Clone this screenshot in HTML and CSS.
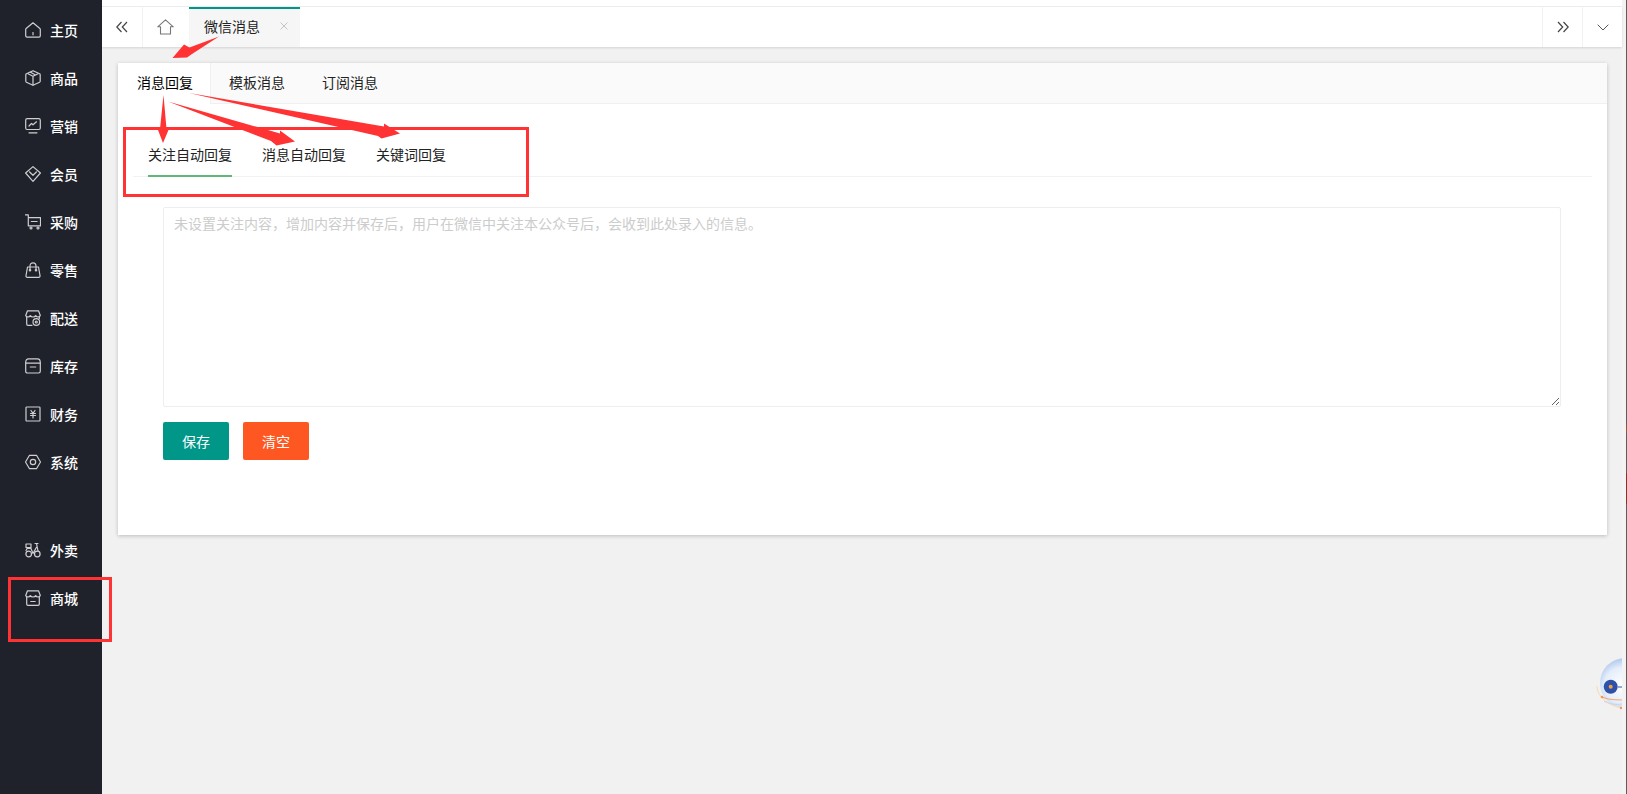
FILE: index.html
```html
<!DOCTYPE html>
<html lang="zh-CN">
<head>
<meta charset="utf-8">
<title>微信消息</title>
<link rel="stylesheet" href="styles.css">
</head>
<body>
<div class="app">
  <nav class="sidebar">
    <ul class="menu">
      <li><a class="menu-item" href="#"><svg class="menu-icon" viewBox="0 0 16 16"><path d="M8 .8 14.600 6.200c.4.3.7.7.7 1.200v6.400c0 .8-.6 1.400-1.400 1.400H2.100c-.8 0-1.400-.6-1.400-1.400V7.400c0-.5.3-.9.7-1.200Z"/><path d="M8 10.600v2.200"/></svg><span>主页</span></a></li>
      <li><a class="menu-item" href="#"><svg class="menu-icon" viewBox="0 0 16 16"><path d="M8 .7 14.600 3.800c.4.2.6.5.6.9v6.600c0 .4-.2.7-.6.9L8 15.300 1.400 12.200c-.4-.2-.6-.5-.6-.9V4.700c0-.4.2-.7.6-.9Z"/><path d="M3 3.700 8 6.300 13 3.700M8 6.300V15M5.500 2.300 10.500 5"/></svg><span>商品</span></a></li>
      <li><a class="menu-item" href="#"><svg class="menu-icon" viewBox="0 0 16 16"><rect x=".7" y=".7" width="14.600" height="10.800" rx="1.500"/><path d="M4 8 6.500 5.500 8 6.800 11.500 3.800M4 14.800h8"/></svg><span>营销</span></a></li>
      <li><a class="menu-item" href="#"><svg class="menu-icon" viewBox="0 0 16 16"><path d="M8 .6 15.400 7 8 15.400.6 7Z"/><path d="M4.600 6 8 9.300 11.400 6"/></svg><span>会员</span></a></li>
      <li><a class="menu-item" href="#"><svg class="menu-icon" viewBox="0 0 16 16"><path d="M.3 .8H3.300V11.800H15.500V3.700H3.300"/><path d="M6.300 7.500h5.800"/><circle cx="6" cy="14" r="1"/><circle cx="13" cy="14" r="1"/></svg><span>采购</span></a></li>
      <li><a class="menu-item" href="#"><svg class="menu-icon" viewBox="0 0 16 16"><path d="M2.500 5H13.500L15 13.500C15.200 14.500 14.600 15.300 13.600 15.300H2.400C1.400 15.300 .8 14.500 1 13.500Z"/><path d="M5 7.500V4C5 2 6.300 .8 8 .8S11 2 11 4V7.500"/><circle cx="5" cy="8.300" r=".7"/><circle cx="11" cy="8.300" r=".7"/></svg><span>零售</span></a></li>
      <li><a class="menu-item" href="#"><svg class="menu-icon" viewBox="0 0 16 16"><path d="M2.500.8H13.500L15.300 5.500C14.500 7.500 11.500 7.500 10.700 5.500 10 7.500 6 7.500 5.300 5.500 4.500 7.500 1.500 7.500.7 5.500Z"/><path d="M1.700 7V14c0 .8.5 1.300 1.300 1.300H7M14.300 7V8.500"/><circle cx="11.300" cy="12" r="3.300"/><circle cx="11.300" cy="12" r="1"/></svg><span>配送</span></a></li>
      <li><a class="menu-item" href="#"><svg class="menu-icon" viewBox="0 0 16 16"><path d="M3.500.8H12.500C14 .8 15.300 2 15.300 4.500V13.300C15.300 14.300 14.600 15 13.600 15H2.400C1.400 15 .7 14.300.7 13.300V4.500C.7 2 2 .8 3.500.8Z"/><path d="M.7 5.200H15.300M5.300 9h5.400"/></svg><span>库存</span></a></li>
      <li><a class="menu-item" href="#"><svg class="menu-icon" viewBox="0 0 16 16"><rect x="1" y="1" width="14" height="14" rx=".8"/><path d="M6 4.500 8 7.300 10 4.500M5.500 7.500h5M5.500 9.500h5M8 7.300V12"/></svg><span>财务</span></a></li>
      <li><a class="menu-item" href="#"><svg class="menu-icon" viewBox="0 0 16 16"><path d="M4.500 1.300H11.500L15.500 8 11.500 14.700H4.500L.5 8Z"/><circle cx="8" cy="8" r="2.700"/></svg><span>系统</span></a></li>
      <li class="menu-gap"><a class="menu-item" href="#"><svg class="menu-icon" viewBox="0 0 16 16"><path d="M1 2H6V5.500H1ZM1 8.500 2 6.500H6L8 11.500M10 1.500H13M11.500 1.500 13 9M11.300 5.500 8 11.500"/><circle cx="3.700" cy="12" r="2.800"/><circle cx="12.300" cy="12" r="2.800"/></svg><span>外卖</span></a></li>
      <li><a class="menu-item" href="#"><svg class="menu-icon" viewBox="0 0 16 16"><path d="M2.500.8H13.500L15.300 5.500C14.500 7.500 11.500 7.500 10.700 5.500 10 7.500 6 7.500 5.300 5.500 4.500 7.500 1.500 7.500.7 5.500Z"/><path d="M1.700 7V14c0 .8.5 1.300 1.300 1.300H13c.8 0 1.300-.5 1.300-1.300V7M5.800 11.500h4.400"/></svg><span>商城</span></a></li>
    </ul>
  </nav>
  <div class="main">
    <div class="top-strip"></div>
    <header class="topbar">
      <button class="tool-btn" type="button" aria-label="向左"><svg class="tool-icon" viewBox="0 0 12 12"><path d="M5.500 1 .8 6 5.500 11M11 1 6.300 6 11 11"/></svg></button>
      <button class="tool-btn home-btn" type="button" aria-label="首页"><svg class="home-icon" viewBox="0 0 17 16"><path d="M8.500.8 16.300 7.800H13.500V15H3.500V7.800H.7Z"/></svg></button>
      <div class="page-tab"><span>微信消息</span><svg class="close-icon" viewBox="0 0 8 8"><path d="M.5.5 7.500 7.500M7.500.5.500 7.500"/></svg></div>
      <div class="topbar-fill"></div>
      <button class="tool-btn tool-left" type="button" aria-label="向右"><svg class="tool-icon" viewBox="0 0 12 12"><path d="M1 1 5.700 6 1 11M6.500 1 11.200 6 6.500 11"/></svg></button>
      <button class="tool-btn tool-left" type="button" aria-label="更多"><svg class="chevron" viewBox="0 0 12 7"><path d="M.7.7 6 6 11.300.7"/></svg></button>
    </header>
    <main class="content">
      <section class="card">
        <div class="card-tabs">
          <a class="card-tab active" href="#">消息回复</a>
          <a class="card-tab" href="#">模板消息</a>
          <a class="card-tab" href="#">订阅消息</a>
        </div>
        <div class="card-body">
          <div class="sub-tabs">
            <a class="sub-tab active" href="#">关注自动回复</a>
            <a class="sub-tab" href="#">消息自动回复</a>
            <a class="sub-tab" href="#">关键词回复</a>
          </div>
          <div class="form">
            <textarea class="reply-input" placeholder="未设置关注内容，增加内容并保存后，用户在微信中关注本公众号后，会收到此处录入的信息。"></textarea>
            <div class="actions">
              <button class="btn btn-save" type="button">保存</button>
              <button class="btn btn-clear" type="button">清空</button>
            </div>
          </div>
        </div>
      </section>
    </main>
  </div>
  <div class="edge-strip"></div>
</div>

<svg class="orb" viewBox="0 0 26 54" aria-hidden="true">
  <defs>
    <radialGradient id="orbFill" cx="45%" cy="55%" r="65%">
      <stop offset="0" stop-color="#ffffff"/>
      <stop offset=".55" stop-color="#e6eefb"/>
      <stop offset="1" stop-color="#8fb2e6"/>
    </radialGradient>
  </defs>
  <circle cx="29" cy="26" r="25" fill="url(#orbFill)"/>
  <path d="M1 29C1 38 10 48 26 51" fill="none" stroke="#fbd5b0" stroke-width="1"/>
  <path d="M6 40C12 43 20 43 26 43" fill="none" stroke="#f5a868" stroke-width="1.200"/>
  <path d="M8 44C13 47 20 48 26 47" fill="none" stroke="#c9d3e6" stroke-width="1"/>
  <circle cx="14.700" cy="29.700" r="7" fill="#2f50a8"/>
  <circle cx="14.700" cy="29.700" r="2" fill="#f2a040"/>
  <path d="M22 30H26" stroke="#2f50a8" stroke-width="1"/>
  <circle cx="6" cy="40" r="1.300" fill="#f59a4c"/>
  <circle cx="25" cy="51" r="1.200" fill="#f59a4c"/>
</svg>

<svg class="annotations" viewBox="0 0 1627 794" aria-hidden="true">
  <g class="note-box">
    <rect x="124.500" y="128.500" width="403" height="67"/>
    <rect x="9.500" y="578.500" width="101" height="62"/>
  </g>
  <g class="note-arrow">
    <polygon points="219,36.500 189.500,47.500 184,44.500 172.500,58 187,57.500 192,54"/>
    <polygon points="163.500,95 166.500,129 168.500,130 163,143 158,130 160,129"/>
    <polygon points="168,101.500 280,133.500 280,130.500 295,141.500 276.500,145.500 271,141"/>
    <polygon points="189,93 384,126.500 384,123.500 400,133.500 381.500,138.500 378,136"/>
  </g>
</svg>
</body>
</html>
```

FILE: styles.css
```css
* {
  box-sizing: border-box;
}

html,
body {
  margin: 0;
  height: 100%;
  overflow: hidden;
}

body {
  position: relative;
  font-family: "Noto Sans CJK SC", "Liberation Sans", sans-serif;
  font-size: 14px;
  color: #222;
  background: #f1f1f1;
}

a {
  color: inherit;
  text-decoration: none;
}

.app {
  display: flex;
  height: 100vh;
}

/* sidebar */
.sidebar {
  flex: 0 0 102px;
  background: #20222b;
  padding-top: 6px;
}

.menu {
  list-style: none;
  margin: 0;
  padding: 0;
}

.menu-gap {
  margin-top: 40px;
}

.menu-item {
  display: flex;
  align-items: center;
  gap: 9px;
  height: 48px;
  padding-left: 25px;
  color: #fff;
  font-weight: 500;
  line-height: 20px;
}

.menu-icon {
  flex: none;
  width: 16px;
  height: 16px;
  fill: none;
  stroke: #cfcfd2;
  stroke-width: 1.200;
  stroke-linejoin: round;
  stroke-linecap: round;
}

/* main column */
.main {
  flex: 1;
  min-width: 0;
  display: flex;
  flex-direction: column;
}

.edge-strip {
  flex: 0 0 5px;
  background: #f3f3f3;
  border-right: 1px solid #5e5e5e;
  border-image: linear-gradient(to bottom, #5e5e5e 0 53.500%, #8a5a40 53.500% 54.500%, #5e5e5e 54.500% 59.600%, #8e2f28 59.600% 63.400%, #5e5e5e 63.400%) 1;
}

.top-strip {
  height: 7px;
  background: #fff;
  border-bottom: 1px solid #eee;
}

.topbar {
  display: flex;
  height: 40px;
  background: #fff;
  box-shadow: 0 1px 2px rgba(0, 0, 0, .12);
  position: relative;
}

.tool-btn {
  flex: none;
  display: flex;
  align-items: center;
  justify-content: center;
  width: 40px;
  height: 40px;
  padding: 0;
  border: 0;
  background: #fff;
}

.home-btn {
  width: 47px;
  padding-right: 1px;
  border-left: 1px solid #f2f2f2;
}

.tool-left {
  border-left: 1px solid #f2f2f2;
}

.tool-icon {
  width: 12px;
  height: 12px;
  fill: none;
  stroke: #444;
  stroke-width: 1.200;
}

.chevron {
  width: 12px;
  height: 7px;
  fill: none;
  stroke: #555;
  stroke-width: 1;
}

.home-icon {
  width: 17px;
  height: 16px;
  fill: none;
  stroke: #777;
  stroke-width: 1.100;
  stroke-linejoin: round;
}

.page-tab {
  flex: none;
  display: flex;
  align-items: center;
  width: 111px;
  height: 40px;
  padding: 0 0 4px 15px;
  background: #f6f6f6;
  border-top: 2px solid #009688;
}

.close-icon {
  width: 8px;
  height: 8px;
  margin-left: 20px;
  fill: none;
  stroke: #c4c4c4;
  stroke-width: 1;
}

.topbar-fill {
  flex: 1;
}

/* content */
.content {
  flex: 1;
  padding: 16px 15px 0 16px;
}

.card {
  height: 472px;
  background: #fff;
  box-shadow: 0 1px 4px rgba(0, 0, 0, .22);
}

.card-tabs {
  display: flex;
  height: 41px;
  background: #fafafa;
  border-bottom: 1px solid #f0f0f0;
}

.card-tab {
  height: 41px;
  padding: 0 19px 0 18px;
  line-height: 38px;
}

.card-tab.active {
  width: 93px;
  padding: 0 0 0 19px;
  background: #fff;
  color: #000;
  border-right: 1px solid #f0f0f0;
}

.card-body {
  padding: 32px 15px 0;
}

.sub-tabs {
  display: flex;
  height: 41px;
  border-bottom: 1px solid #f2f2f2;
}

.sub-tab {
  position: relative;
  height: 40px;
  padding: 0 15px;
  line-height: 36px;
}

.sub-tab.active::after {
  content: "";
  position: absolute;
  left: 15px;
  right: 15px;
  bottom: -1px;
  height: 2px;
  background: #5fb878;
}

.form {
  padding: 30px 31px 0 30px;
}

.reply-input {
  display: block;
  width: 100%;
  height: 200px;
  padding: 5px 10px;
  border: 1px solid #eee;
  border-radius: 2px;
  outline: 0;
  resize: both;
  font: inherit;
  line-height: 20px;
  color: #333;
}

.reply-input::placeholder {
  color: #ccc;
  opacity: 1;
}

.actions {
  display: flex;
  gap: 14px;
  margin-top: 15px;
}

.btn {
  width: 66px;
  height: 38px;
  padding: 0;
  border: 0;
  border-radius: 2px;
  font: inherit;
  color: #fff;
}

.btn-save {
  background: #009688;
}

.btn-clear {
  background: #ff5722;
}

/* floating widget and screenshot annotations */
.orb {
  position: absolute;
  left: 1596px;
  top: 657px;
  width: 26px;
  height: 54px;
}

.annotations {
  position: absolute;
  left: 0;
  top: 0;
  width: 1627px;
  height: 794px;
  pointer-events: none;
}

.note-box rect {
  fill: none;
  stroke: #ff3333;
  stroke-width: 3;
}

.note-arrow polygon {
  fill: #ff3333;
}
```
